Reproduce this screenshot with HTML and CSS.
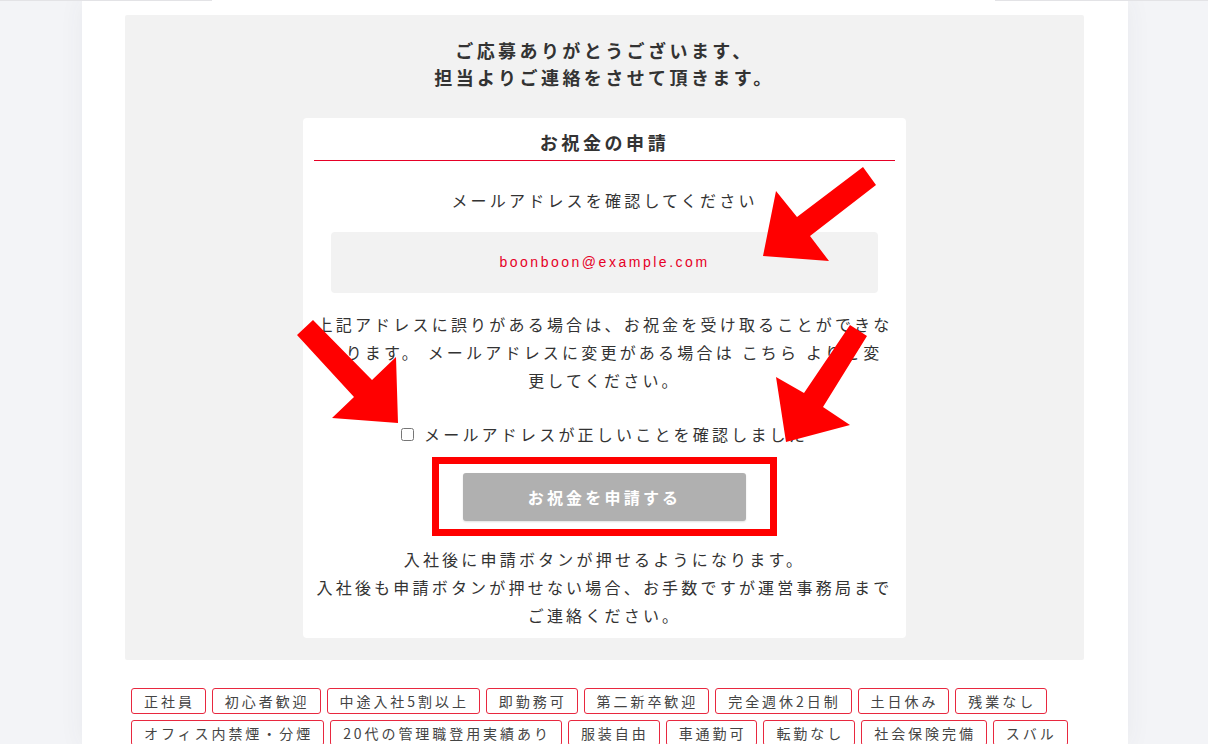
FILE: index.html
```html
<!DOCTYPE html>
<html lang="ja">
<head>
<meta charset="utf-8">
<title>お祝金の申請</title>
<link rel="stylesheet" href="styles.css">
</head>
<body>
<div class="topline"></div>
<main class="column">
  <section class="panel">
    <h1 class="thanks">ご応募ありがとうございます、<br>担当よりご連絡をさせて頂きます。</h1>
    <div class="card">
      <h2 class="card-title">お祝金の申請</h2>
      <p class="label">メールアドレスを確認してください</p>
      <div class="email">boonboon@example.com</div>
      <p class="note">上記アドレスに誤りがある場合は、お祝金を受け取ることができな<br>なります。 メールアドレスに変更がある場合は <a class="link">こちら</a> よりご変<br>更してください。</p>
      <label class="confirm"><input type="checkbox" class="check"><span>メールアドレスが正しいことを確認しました</span></label>
      <div class="highlight"><button class="apply" disabled>お祝金を申請する</button></div>
      <p class="note">入社後に申請ボタンが押せるようになります。<br>入社後も申請ボタンが押せない場合、お手数ですが運営事務局まで<br>ご連絡ください。</p>
    </div>
  </section>
  <ul class="tags">
    <li class="tag">正社員</li>
    <li class="tag">初心者歓迎</li>
    <li class="tag">中途入社5割以上</li>
    <li class="tag">即勤務可</li>
    <li class="tag">第二新卒歓迎</li>
    <li class="tag">完全週休2日制</li>
    <li class="tag">土日休み</li>
    <li class="tag">残業なし</li>
    <li class="tag">オフィス内禁煙・分煙</li>
    <li class="tag">20代の管理職登用実績あり</li>
    <li class="tag">服装自由</li>
    <li class="tag">車通勤可</li>
    <li class="tag">転勤なし</li>
    <li class="tag">社会保険完備</li>
    <li class="tag">スバル</li>
  </ul>
</main>
<svg class="arrows" width="1208" height="744" viewBox="0 0 1208 744" aria-hidden="true">
  <polygon points="863,167 876,185 810,236 829,261 763,256 776,191 797,217" />
  <polygon points="313,320 372,380 396,357 398,423 332,418 354,397 297,335" />
  <polygon points="850,325 867,336 823,407 850,425 786,442 776,377 804,393" />
</svg>
</body>
</html>
```

FILE: styles.css
```css
html, body {
  margin: 0;
  padding: 0;
}
body {
  position: relative;
  background: #f3f4f7;
  font-family: "Noto Sans CJK JP", "Noto Sans", sans-serif;
  color: #333;
  height: 744px;
  overflow: hidden;
}
.topline {
  position: absolute;
  top: 0;
  left: 0;
  width: 1208px;
  height: 1px;
  background: linear-gradient(to right, #e3e3e6 0, #e3e3e6 212px, transparent 212px, transparent 995px, #e3e3e6 995px);
  z-index: 2;
}
.column {
  width: 1046px;
  margin-left: 82px;
  min-height: 744px;
  background: #fff;
  box-sizing: border-box;
  padding: 15px 44px 0 43px;
  box-shadow: 0 0 24px rgba(60, 60, 90, 0.06);
}
.panel {
  background: #f2f2f2;
  border-radius: 2px;
  padding: 22px 0 22px;
}
.thanks {
  margin: 0;
  text-align: center;
  font-size: 18px;
  font-weight: 700;
  line-height: 27px;
  letter-spacing: 0.19em;
  color: #333;
}
.card {
  width: 603px;
  box-sizing: border-box;
  margin: 27px auto 0;
  background: #fff;
  border-radius: 4px;
  padding: 0 11px 9px;
  text-align: center;
}
.card-title {
  margin: 0;
  padding: 10px 0 4px;
  font-size: 18px;
  font-weight: 700;
  line-height: 28px;
  letter-spacing: 0.2em;
  border-bottom: 1px solid #e60026;
  color: #333;
}
.label {
  margin: 25px 0 0;
  font-size: 16px;
  line-height: 28px;
  letter-spacing: 0.2em;
}
.email {
  margin: 18px 17px 0;
  height: 61px;
  line-height: 61px;
  background: #f2f2f2;
  border-radius: 4px;
  color: #e60026;
  font-family: "Liberation Sans", Arial, sans-serif;
  font-size: 14px;
  letter-spacing: 0.18em;
}
.note {
  margin: 17px 0 0;
  font-size: 16px;
  line-height: 28px;
  letter-spacing: 0.2em;
  white-space: nowrap;
}
.link {
  color: inherit;
  text-decoration: none;
}
.confirm {
  margin-top: 26px;
  height: 28px;
  display: flex;
  justify-content: center;
  align-items: center;
  gap: 10px;
  font-size: 16px;
  line-height: 28px;
  letter-spacing: 0.2em;
}
.check {
  width: 13px;
  height: 13px;
  margin: 1px 0 0;
}
.highlight {
  width: 345px;
  box-sizing: border-box;
  margin: 9px auto 0;
  border: 7px solid #ff0000;
  padding: 9px 24px 8px;
}
.apply {
  display: block;
  width: 283px;
  height: 48px;
  border: 0;
  border-radius: 3px;
  background: #b0b0b0;
  color: #fff;
  font-family: "Noto Sans CJK JP", "Noto Sans", sans-serif;
  font-size: 16px;
  font-weight: 700;
  letter-spacing: 0.2em;
  box-shadow: 0 1px 2px rgba(0, 0, 0, 0.12);
  padding: 0;
}
.highlight + .note {
  margin-top: 9px;
}
.tags {
  list-style: none;
  margin: 28px 0 0;
  padding: 0 6px;
  display: flex;
  flex-wrap: wrap;
  gap: 6px;
}
.tag {
  height: 26px;
  box-sizing: border-box;
  border: 1px solid #e8283f;
  border-radius: 3px;
  padding: 0 10px 0 12px;
  font-size: 14px;
  line-height: 24px;
  letter-spacing: 0.21em;
  color: #444;
}
.arrows {
  position: absolute;
  top: 0;
  left: 0;
  pointer-events: none;
  z-index: 3;
}
.arrows polygon {
  fill: #ff0000;
}
```
